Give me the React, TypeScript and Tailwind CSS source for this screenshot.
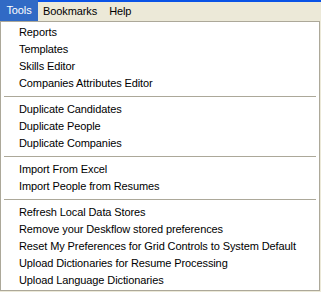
const groups: string[][] = [
  ["Reports", "Templates", "Skills Editor", "Companies Attributes Editor"],
  ["Duplicate Candidates", "Duplicate People", "Duplicate Companies"],
  ["Import From Excel", "Import People from Resumes"],
  [
    "Refresh Local Data Stores",
    "Remove your Deskflow stored preferences",
    "Reset My Preferences for Grid Controls to System Default",
    "Upload Dictionaries for Resume Processing",
    "Upload Language Dictionaries",
  ],
];

const font = { fontFamily: '"Liberation Sans", Arial, sans-serif' };

export default function App() {
  return (
    <div className="w-[321px] h-[292px] bg-[#ECE9D8] text-[11px] tracking-[-0.1px] text-black overflow-hidden" style={font}>
      <div className="h-[2px] bg-[#0A53E6]" />
      <div className="flex h-[19px] items-center">
        <div className="flex h-[21px] -mt-[2px] w-[38px] items-center justify-center bg-[#316AC5] text-white">Tools</div>
        <div className="pl-[5px] pr-[6px]">Bookmarks</div>
        <div className="px-[6px]">Help</div>
      </div>
      <div className="w-[320px] h-[270px] border border-[#ACA899] bg-white pt-[2px]">
        {groups.map((g, gi) => (
          <div key={gi}>
            {gi > 0 && (
              <div className="h-[9px] flex items-center px-[3px]">
                <div className="h-px w-full bg-[#ACA899]" />
              </div>
            )}
            {g.map((t) => (
              <div key={t} className="h-[17px] flex items-center pl-[18px] whitespace-nowrap">
                {t}
              </div>
            ))}
          </div>
        ))}
      </div>
    </div>
  );
}
